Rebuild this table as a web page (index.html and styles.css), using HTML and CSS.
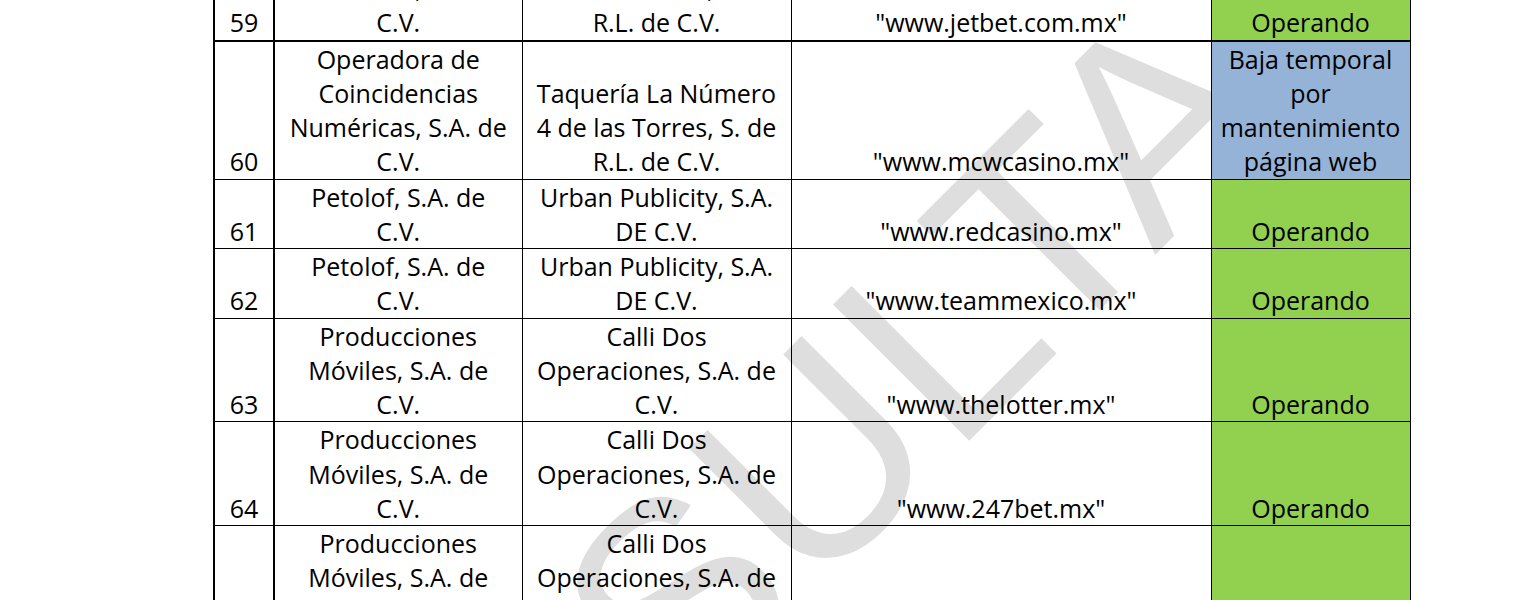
FILE: index.html
```html
<!DOCTYPE html>
<html lang="es">
<head>
<meta charset="utf-8">
<title>Listado</title>
<link rel="stylesheet" href="styles.css">
</head>
<body>
<div class="page">
  <div class="watermark">CONSULTA</div>
  <table class="sheet">
    <colgroup>
      <col class="c-num">
      <col class="c-op">
      <col class="c-perm">
      <col class="c-url">
      <col class="c-status">
    </colgroup>
    <tbody>
      <tr class="first">
        <td class="num">59</td>
        <td>Numéricas, S.A. de<br>C.V.</td>
        <td>4 de las Torres, S. de<br>R.L. de C.V.</td>
        <td>"www.jetbet.com.mx"</td>
        <td class="ok">Operando</td>
      </tr>
      <tr>
        <td class="num">60</td>
        <td>Operadora de<br>Coincidencias<br>Numéricas, S.A. de<br>C.V.</td>
        <td>Taquería La Número<br>4 de las Torres, S. de<br>R.L. de C.V.</td>
        <td>"www.mcwcasino.mx"</td>
        <td class="paused">Baja temporal<br>por<br>mantenimiento<br>página web</td>
      </tr>
      <tr>
        <td class="num">61</td>
        <td>Petolof, S.A. de<br>C.V.</td>
        <td>Urban Publicity, S.A.<br>DE C.V.</td>
        <td>"www.redcasino.mx"</td>
        <td class="ok">Operando</td>
      </tr>
      <tr>
        <td class="num">62</td>
        <td>Petolof, S.A. de<br>C.V.</td>
        <td>Urban Publicity, S.A.<br>DE C.V.</td>
        <td>"www.teammexico.mx"</td>
        <td class="ok">Operando</td>
      </tr>
      <tr>
        <td class="num">63</td>
        <td>Producciones<br>Móviles, S.A. de<br>C.V.</td>
        <td>Calli Dos<br>Operaciones, S.A. de<br>C.V.</td>
        <td>"www.thelotter.mx"</td>
        <td class="ok">Operando</td>
      </tr>
      <tr>
        <td class="num">64</td>
        <td>Producciones<br>Móviles, S.A. de<br>C.V.</td>
        <td>Calli Dos<br>Operaciones, S.A. de<br>C.V.</td>
        <td>"www.247bet.mx"</td>
        <td class="ok">Operando</td>
      </tr>
      <tr>
        <td class="num">65</td>
        <td>Producciones<br>Móviles, S.A. de<br>C.V.</td>
        <td>Calli Dos<br>Operaciones, S.A. de<br>C.V.</td>
        <td>"www.jugadamaestra.mx"</td>
        <td class="ok">Operando</td>
      </tr>
    </tbody>
  </table>
</div>
</body>
</html>
```

FILE: styles.css
```css
html, body {
  margin: 0;
  padding: 0;
  background: #ffffff;
}

.page {
  position: relative;
  padding-left: 213px;
  overflow: hidden;
  height: 600px;
}

.watermark {
  position: absolute;
  left: 238px;
  top: 935px;
  font-family: "Liberation Sans", Arial, sans-serif;
  font-size: 280px;
  line-height: 1;
  color: #dedede;
  white-space: nowrap;
  transform-origin: 0 237px;
  transform: rotate(-45deg);
  z-index: 0;
}

.sheet {
  position: relative;
  z-index: 1;
  margin-top: -30px;
  border-collapse: collapse;
  table-layout: fixed;
  width: 1196px;
  border-left: 2px solid #000;
  font-family: "Open Sans", "Noto Sans", sans-serif;
  font-size: 25px;
  line-height: 34.25px;
  color: #000;
}

.c-num { width: 60px; }
.c-op { width: 248px; }
.c-perm { width: 269px; }
.c-url { width: 420px; }
.c-status { width: 199px; }

.sheet td {
  border: 1px solid #000;
  padding: 0 2px;
  text-align: center;
  vertical-align: bottom;
  white-space: nowrap;
}

.sheet td.num {
  border-right: 2px solid #000;
}

.sheet tr.first td {
  border-bottom: 2px solid #000;
}

.sheet td.ok {
  background: #92d050;
}

.sheet td.paused {
  background: #95b3d7;
}
```
